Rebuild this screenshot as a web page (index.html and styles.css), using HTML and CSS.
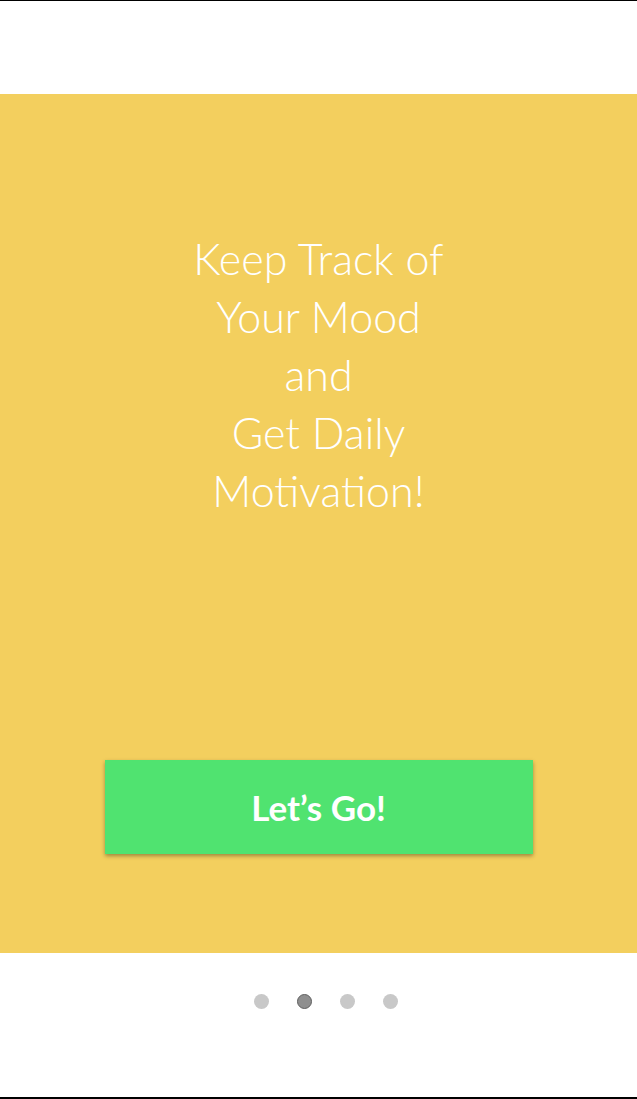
FILE: index.html
```html
<!DOCTYPE html>
<html>
<head>
<meta charset="utf-8">
<link rel="stylesheet" href="styles.css">
</head>
<body>
<div class="screen">
  <div class="top-space"></div>
  <section class="panel">
    <h1 class="headline">Keep Track of<br>Your Mood<br>and<br>Get Daily<br>Motivation!</h1>
    <button class="go-btn">Let’s Go!</button>
  </section>
  <div class="pager">
    <span class="dot"></span>
    <span class="dot active"></span>
    <span class="dot"></span>
    <span class="dot"></span>
  </div>
</div>
</body>
</html>
```
FILE: styles.css
```css
html, body {
  margin: 0;
  padding: 0;
  background: #ffffff;
}
.screen {
  width: 637px;
  height: 1099px;
  box-sizing: border-box;
  border-top: 1px solid #000;
  border-bottom: 2px solid #000;
  display: flex;
  flex-direction: column;
  font-family: "Lato", "Noto Sans", sans-serif;
}
.top-space {
  height: 93px;
}
.panel {
  height: 859px;
  background: #f3cf5e;
  display: flex;
  flex-direction: column;
  align-items: center;
  box-sizing: border-box;
  padding-top: 136px;
}
.headline {
  margin: 0;
  color: #ffffff;
  font-weight: 300;
  font-size: 43px;
  line-height: 58px;
  text-align: center;
}
.go-btn {
  margin-top: 240px;
  width: 428px;
  height: 94px;
  border: none;
  background: #50e370;
  color: #ffffff;
  font-family: "Lato", "Noto Sans", sans-serif;
  font-weight: 700;
  font-size: 35px;
  box-shadow: 0 2px 4px rgba(0, 0, 0, 0.35);
}
.pager {
  flex: 1;
  display: flex;
  justify-content: center;
  gap: 28px;
  padding-top: 41px;
  padding-left: 15px;
}
.dot {
  width: 15px;
  height: 15px;
  border-radius: 50%;
  background: #c8c8c8;
  box-sizing: border-box;
}
.dot.active {
  background: #8f8f8f;
  border: 1px solid #5f5f5f;
}
```
